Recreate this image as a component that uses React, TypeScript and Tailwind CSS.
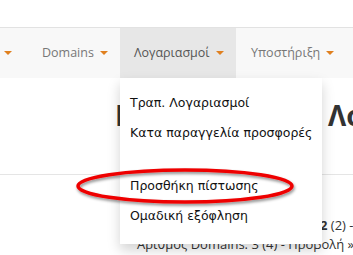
import React from 'react';

const Caret = () => (
  <span className="ml-[6px] inline-block h-0 w-0 border-x-[4px] border-t-[4px] border-x-transparent border-t-[#e0801f]" />
);

const navItems = [
  { label: 'Domains', active: false, w: 'w-[93px]', pl: 'pl-[15px]' },
  { label: 'Λογαριασμοί', active: true, w: 'w-[116px]', pl: 'pl-[14px]' },
  { label: 'Υποστήριξη', active: false, w: 'w-[117px]', pl: 'pl-[15px]' },
];

const menuItems = ['Τραπ. Λογαριασμοί', 'Κατα παραγγελία προσφορές', null, 'Προσθήκη πίστωσης', 'Ομαδική εξόφληση'];

export default function App() {
  return (
    <div className="relative h-[255px] w-[353px] overflow-hidden bg-white font-['Open_Sans',sans-serif]">
      {/* Navbar */}
      <div className="mt-[27px] flex h-[51px] items-stretch border-t border-[#e2e2e2] bg-[#f8f8f8] text-[12.5px] text-[#777]">
        <div className="flex w-[27px] shrink-0 items-center justify-end pr-[15px]">
          <span className="inline-block h-0 w-0 border-x-[4px] border-t-[4px] border-x-transparent border-t-[#e0801f]" />
        </div>
        {navItems.map((item) => (
          <div
            key={item.label}
            className={`flex shrink-0 items-center whitespace-nowrap ${item.w} ${item.pl} ${item.active ? 'bg-[#e7e7e7] text-[#555]' : ''}`}
          >
            {item.label}
            <Caret />
          </div>
        ))}
      </div>

      {/* Page content behind the menu */}
      <div className="mt-[21px] flex items-center pl-[115px] text-[28px] font-bold leading-[32px] text-[#333]">
        <span className="w-[213px] shrink-0 overflow-hidden whitespace-nowrap">Πίνακας</span>
        <span className="whitespace-nowrap">Λογαριασμοί</span>
      </div>
      <div className="mt-[43px] border-t border-[#e5e5e5]" />
      <div className="mt-[41px] whitespace-nowrap pl-[137px] text-[13px] leading-[19px] text-[#333]">
        <div>
          Αριθμός Ενεργών Υπηρεσιών: <b>2</b> (2) - Προβολή »
        </div>
        <div>Αριθμός Domains: 3 (4) - Προβολή »</div>
      </div>

      {/* Dropdown */}
      <div className="absolute left-[120px] top-[78px] w-[202px] bg-white pt-[10px] pb-[13px] font-['DejaVu_Sans',sans-serif] text-[12.5px] text-[#111] shadow-[0_6px_12px_rgba(0,0,0,0.175)]">
        {menuItems.map((m, i) =>
          m === null ? (
            <div key={i} className="my-[11px] h-px" />
          ) : (
            <div key={i} className="flex h-[30px] items-center whitespace-nowrap pl-[10px]">
              {m}
            </div>
          ),
        )}
      </div>

      {/* Red annotation ellipse */}
      <svg className="absolute left-[70px] top-[162px]" width="232" height="50" viewBox="0 0 232 50">
        <defs>
          <filter id="sh" x="-10%" y="-30%" width="120%" height="160%">
            <feDropShadow dx="1" dy="2" stdDeviation="1.5" floodColor="#000" floodOpacity="0.45" />
          </filter>
        </defs>
        <ellipse cx="115" cy="24" rx="107" ry="16" fill="none" stroke="#ee0000" strokeWidth="3.5" filter="url(#sh)" />
      </svg>
    </div>
  );
}
